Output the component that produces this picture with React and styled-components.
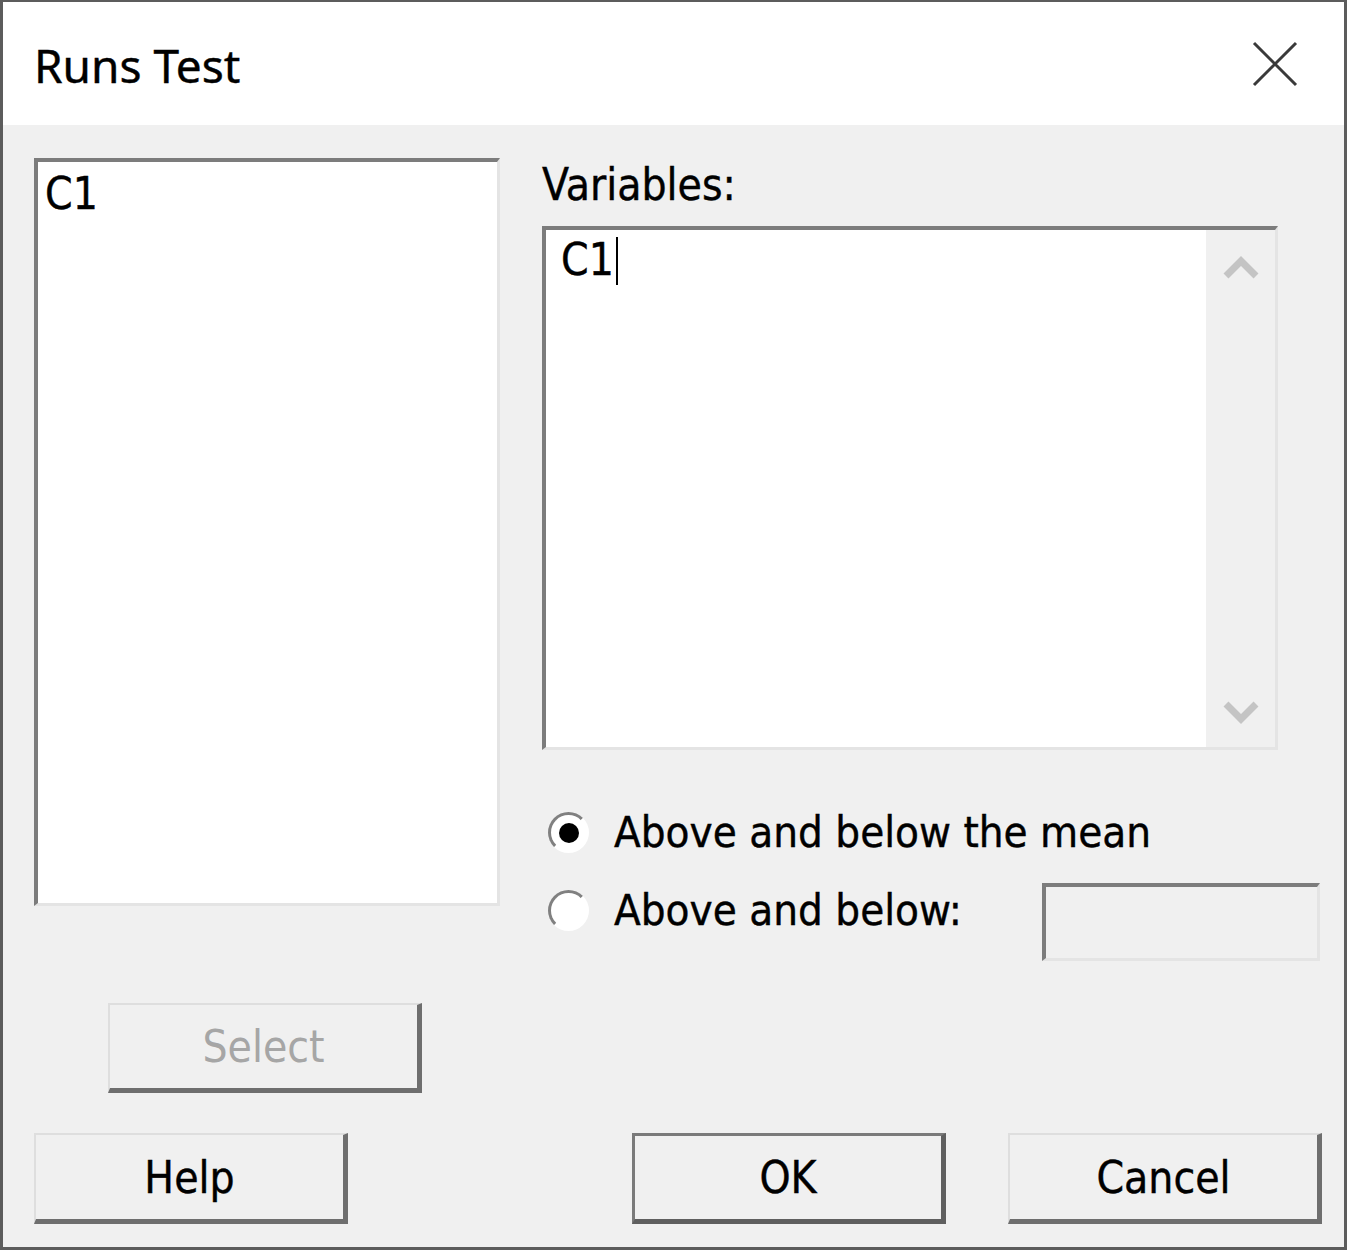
import styled, { createGlobalStyle } from 'styled-components';

const GlobalStyle = createGlobalStyle`
  html, body {
    margin: 0;
    padding: 0;
    background: #ffffff;
  }
  * {
    box-sizing: border-box;
  }
`;

const uiFont = `"DejaVu Sans Condensed", "DejaVu Sans", sans-serif`;

const Chevron = ({ down }) => (
  <svg width="36" height="28" viewBox="0 0 36 28">
    <polyline
      points={down ? '3,6 18,21 33,6' : '3,22 18,7 33,22'}
      fill="none"
      stroke="#c4c4c4"
      strokeWidth="7"
    />
  </svg>
);

const CloseIcon = () => (
  <svg width="46" height="46" viewBox="0 0 46 46">
    <path d="M2 2 L44 44 M44 2 L2 44" stroke="#3a3a3a" strokeWidth="3" />
  </svg>
);

export default function App() {
  return (
    <>
      <GlobalStyle />
      <Window>
        <TitleBar>
          <Title>Runs Test</Title>
          <CloseButton>
            <CloseIcon />
          </CloseButton>
        </TitleBar>

        <Body>
          <Main>
            <LeftCol>
              <ListBox>
                <ListItem>C1</ListItem>
              </ListBox>
              <SelectButton disabled>Select</SelectButton>
            </LeftCol>

            <RightCol>
              <FieldLabel>Variables:</FieldLabel>
              <VarBox>
                <VarText>
                  C1<Caret />
                </VarText>
                <ScrollTrack>
                  <Chevron />
                  <Chevron down />
                </ScrollTrack>
              </VarBox>

              <Options>
                <RadioRow>
                  <Radio $checked />
                  <RadioLabel>Above and below the mean</RadioLabel>
                </RadioRow>
                <RadioRow>
                  <Radio />
                  <RadioLabel>Above and below:</RadioLabel>
                  <ValueInput />
                </RadioRow>
              </Options>
            </RightCol>
          </Main>

          <ButtonRow>
            <DialogButton>Help</DialogButton>
            <ButtonGroup>
              <DialogButton $default>OK</DialogButton>
              <DialogButton>Cancel</DialogButton>
            </ButtonGroup>
          </ButtonRow>
        </Body>
      </Window>
    </>
  );
}

const Window = styled.div`
  width: 1347px;
  height: 1250px;
  display: flex;
  flex-direction: column;
  border: 3px solid #5c5c5c;
  border-top-width: 2px;
  background: #f0f0f0;
  font-family: ${uiFont};
  color: #000;
  -webkit-text-stroke: 0.4px #000;
`;

const TitleBar = styled.div`
  height: 123px;
  flex-shrink: 0;
  background: #ffffff;
  display: flex;
  align-items: center;
  justify-content: space-between;
  padding: 0 44px 0 31px;
`;

const Title = styled.div`
  font-family: "Noto Sans", "Open Sans", sans-serif;
  font-size: 46px;
  color: #000;
  margin-top: 2px;
`;

const CloseButton = styled.div`
  display: flex;
  align-items: center;
  justify-content: center;
  width: 50px;
  height: 50px;
`;

const Body = styled.div`
  flex: 1;
  padding: 33px 22px 0 31px;
  display: flex;
  flex-direction: column;
`;

const Main = styled.div`
  display: grid;
  grid-template-columns: 466px 1fr;
  column-gap: 42px;
  align-items: start;
`;

const LeftCol = styled.div`
  display: flex;
  flex-direction: column;
  align-items: flex-start;
`;

const sunken = `
  border-style: solid;
  border-width: 4px 3px 3px 4px;
  border-color: #7c7c7c #e4e4e4 #e4e4e4 #7c7c7c;
`;

const ListBox = styled.div`
  width: 466px;
  height: 748px;
  background: #ffffff;
  ${sunken}
  padding: 5px 7px;
`;

const ListItem = styled.div`
  font-size: 44px;
  line-height: 53px;
`;

const RightCol = styled.div`
  display: flex;
  flex-direction: column;
`;

const FieldLabel = styled.div`
  font-size: 44px;
  line-height: 53px;
  margin-bottom: 15px;
`;

const VarBox = styled.div`
  width: 736px;
  height: 524px;
  background: #ffffff;
  ${sunken}
  display: flex;
`;

const VarText = styled.div`
  flex: 1;
  font-size: 44px;
  line-height: 53px;
  padding: 3px 15px;
  display: flex;
  align-items: flex-start;
`;

const Caret = styled.span`
  display: inline-block;
  width: 2px;
  height: 48px;
  margin: 4px 0 0 2px;
  background: #000;
`;

const ScrollTrack = styled.div`
  width: 69px;
  background: #f0f0f0;
  display: flex;
  flex-direction: column;
  align-items: center;
  justify-content: space-between;
  padding: 24px 0 21px;
`;

const Options = styled.div`
  margin-top: 54px;
  display: flex;
  flex-direction: column;
  gap: 22px;
`;

const RadioRow = styled.div`
  display: flex;
  align-items: flex-start;
  height: 56px;
`;

const Radio = styled.span`
  position: relative;
  width: 41px;
  height: 41px;
  margin: 8px 25px 0 6px;
  border-radius: 50%;
  border-style: solid;
  border-width: 3px;
  border-color: #808080 #ffffff #ffffff #808080;
  background: #ffffff;
  flex-shrink: 0;

  &::after {
    content: '';
    position: absolute;
    left: 50%;
    top: 50%;
    width: 20px;
    height: 20px;
    margin: -10px 0 0 -10px;
    border-radius: 50%;
    background: #000;
    display: ${(p) => (p.$checked ? 'block' : 'none')};
  }
`;

const RadioLabel = styled.span`
  font-size: 43.5px;
  line-height: 56px;
  white-space: nowrap;
`;

const ValueInput = styled.div`
  margin-left: auto;
  margin-right: 2px;
  margin-top: 1px;
  width: 278px;
  height: 78px;
  background: #f0f0f0;
  ${sunken}
`;

const buttonBase = `
  width: 314px;
  height: 91px;
  background: #f0f0f0;
  font-family: ${uiFont};
  font-size: 44px;
  border-style: solid;
  border-width: 2px 5px 5px 2px;
  padding: 0;
  cursor: default;
`;

const SelectButton = styled.button`
  ${buttonBase}
  height: 90px;
  margin: 97px 0 0 74px;
  border-color: #dedede #6e6e6e #6e6e6e #dedede;
  color: #a6a6a6;
  -webkit-text-stroke: 0;
`;

const ButtonRow = styled.div`
  margin-top: 40px;
  display: flex;
  justify-content: space-between;
  align-items: center;
`;

const ButtonGroup = styled.div`
  display: flex;
  gap: 62px;
`;

const DialogButton = styled.button`
  ${buttonBase}
  color: #000;
  -webkit-text-stroke: 0.4px #000;
  border-color: ${(p) =>
    p.$default
      ? '#7a7a7a #5f5f5f #5f5f5f #7a7a7a'
      : '#dedede #6e6e6e #6e6e6e #dedede'};
  border-width: ${(p) => (p.$default ? '3px 5px 5px 3px' : '2px 5px 5px 2px')};
`;
